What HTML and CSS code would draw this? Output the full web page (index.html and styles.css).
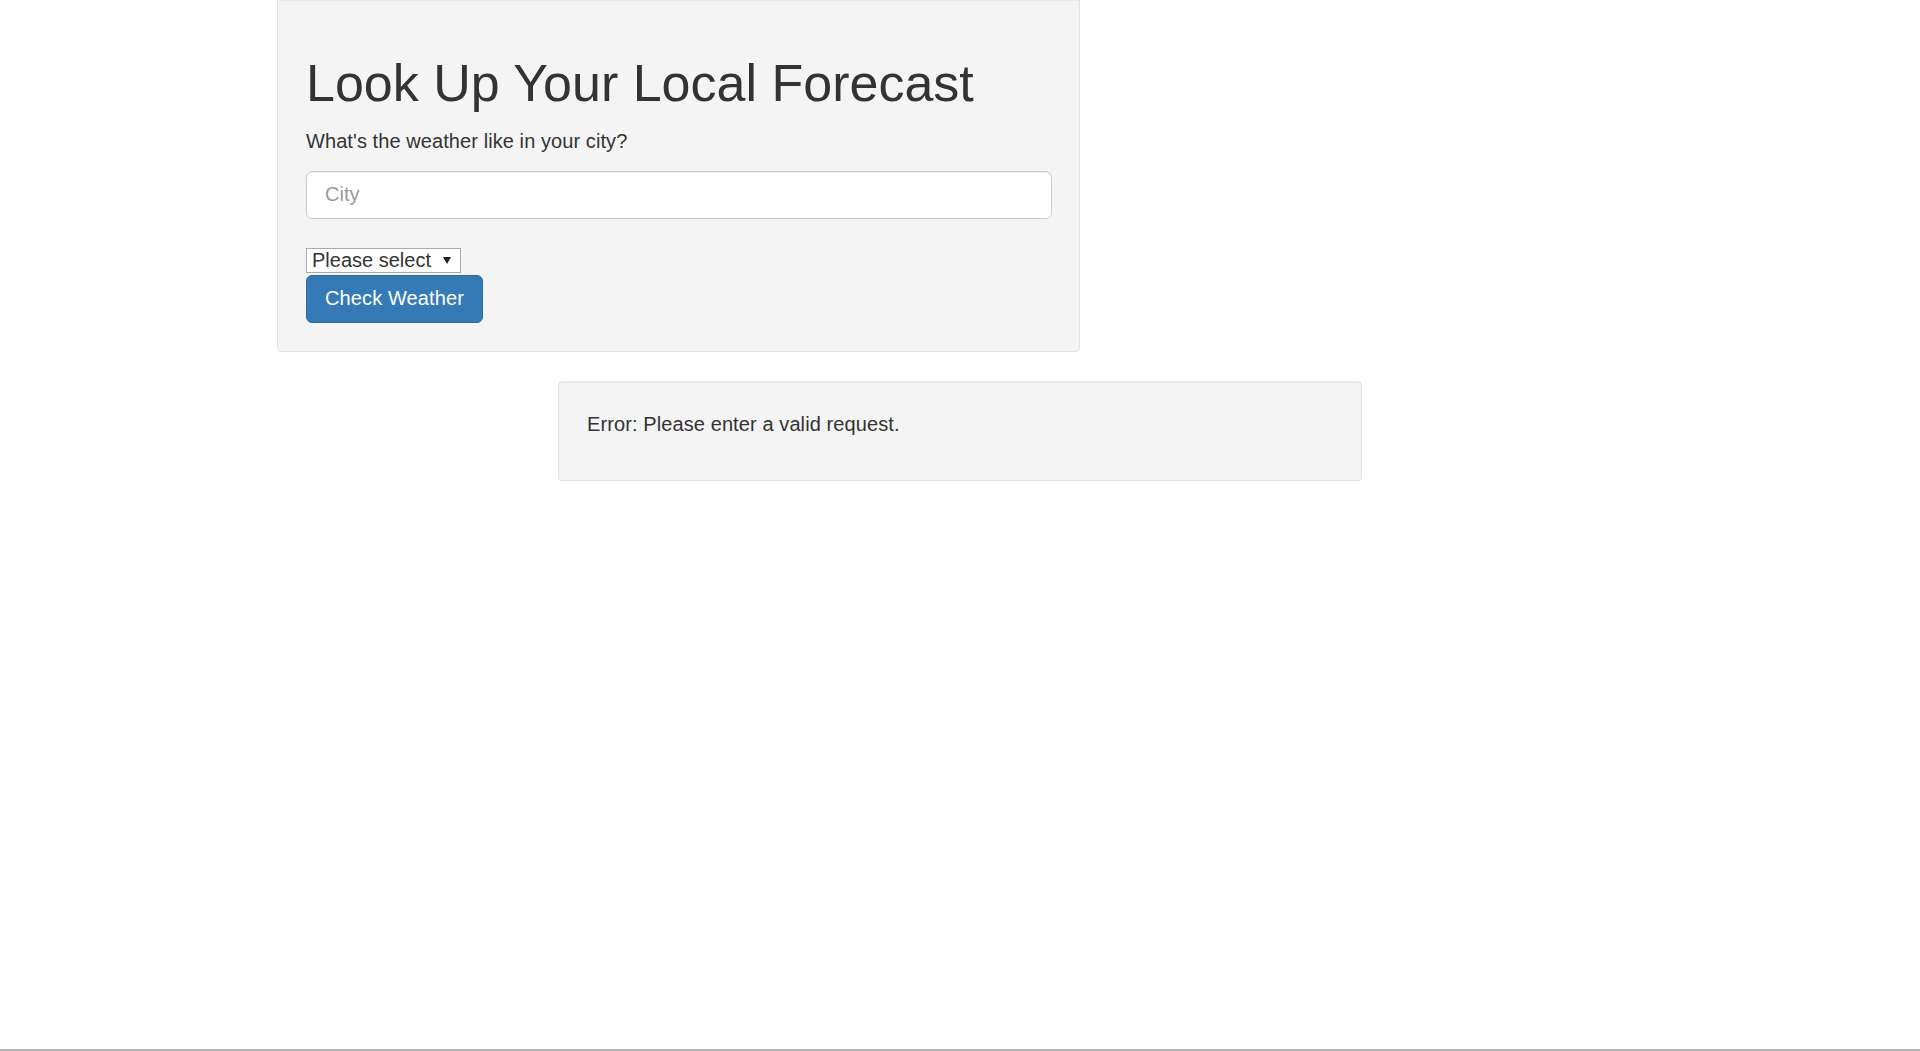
FILE: index.html
```html
<!DOCTYPE html>
<html lang="en">
<head>
<meta charset="utf-8">
<title>Weather</title>
<link rel="stylesheet" href="styles.css">
</head>
<body>
<main class="page">
  <section class="well well-form">
    <h1 class="title">Look Up Your Local Forecast</h1>
    <p class="lead">What's the weather like in your city?</p>
    <form class="form">
      <input class="city-input" type="text" placeholder="City">
      <span class="select-wrap">
        <select class="unit-select">
          <option>Please select</option>
        </select>
      </span>
      <button class="btn" type="button">Check Weather</button>
    </form>
  </section>
  <section class="well well-error">
    <p class="error-text">Error: Please enter a valid request.</p>
  </section>
</main>
<div class="bottom-line"></div>
</body>
</html>
```

FILE: styles.css
```css
html, body {
  margin: 0;
  padding: 0;
  height: 100%;
}
body {
  display: flex;
  flex-direction: column;
  background: #ffffff;
  color: #333333;
  font-family: "Liberation Sans", Arial, sans-serif;
  font-size: 20px;
  line-height: 1.42857;
}
.page {
  flex: 1;
  width: 1366px;
  margin: 0 auto;
  display: flex;
  flex-direction: column;
  align-items: flex-start;
}
.well {
  box-sizing: border-box;
  width: 803px;
  background: #f4f4f4;
  border: 1px solid #e3e3e3;
  border-radius: 4px;
  box-shadow: inset 0 1px 1px rgba(0, 0, 0, 0.05);
  padding: 28px 27px 28px 28px;
}
.well-form {
  margin-top: -1px;
  border-top-left-radius: 0;
  border-top-right-radius: 0;
  padding-top: 29px;
}
.well-error {
  align-self: center;
  margin-top: 29px;
  width: 804px;
  padding-top: 28px;
  padding-bottom: 28px;
}
.title {
  margin: 26px 0 0;
  font-size: 52px;
  font-weight: 400;
  line-height: 1.1;
  color: #333333;
}
.lead {
  margin: 15px 0 0;
  font-size: 20px;
  letter-spacing: 0.08px;
}
.form {
  display: flex;
  flex-direction: column;
  align-items: flex-start;
}
.city-input {
  box-sizing: border-box;
  width: 746px;
  height: 48px;
  margin-top: 15px;
  padding: 0 18px;
  font-family: inherit;
  font-size: 20px;
  color: #555555;
  background: #ffffff;
  border: 1px solid #cccccc;
  border-radius: 6px;
  box-shadow: inset 0 1px 1px rgba(0, 0, 0, 0.075);
  outline: none;
}
.city-input::placeholder {
  color: #999999;
}
.select-wrap {
  position: relative;
  display: block;
  margin-top: 29px;
}
.select-wrap::after {
  content: "";
  position: absolute;
  right: 10px;
  top: 9px;
  border-left: 4px solid transparent;
  border-right: 4px solid transparent;
  border-top: 7px solid #222222;
  pointer-events: none;
}
.unit-select {
  appearance: none;
  -webkit-appearance: none;
  display: block;
  box-sizing: border-box;
  width: 155px;
  height: 25px;
  margin: 0;
  padding: 0 20px 0 5px;
  font-family: inherit;
  font-size: 20px;
  line-height: 23px;
  color: #333333;
  background: #ffffff;
  border: 1px solid #a9a9a9;
  border-radius: 0;
}
.btn {
  box-sizing: border-box;
  height: 48px;
  margin-top: 2px;
  padding: 0 18px;
  font-family: inherit;
  font-size: 20px;
  letter-spacing: 0.12px;
  color: #ffffff;
  background: #337ab7;
  border: 1px solid #2e6da4;
  border-radius: 6px;
  cursor: pointer;
}
.error-text {
  margin: 0 0 14px;
  font-size: 20px;
  letter-spacing: 0.1px;
}
.bottom-line {
  height: 2px;
  background: #b3b3b3;
  flex-shrink: 0;
  margin-top: 1px;
}
```
